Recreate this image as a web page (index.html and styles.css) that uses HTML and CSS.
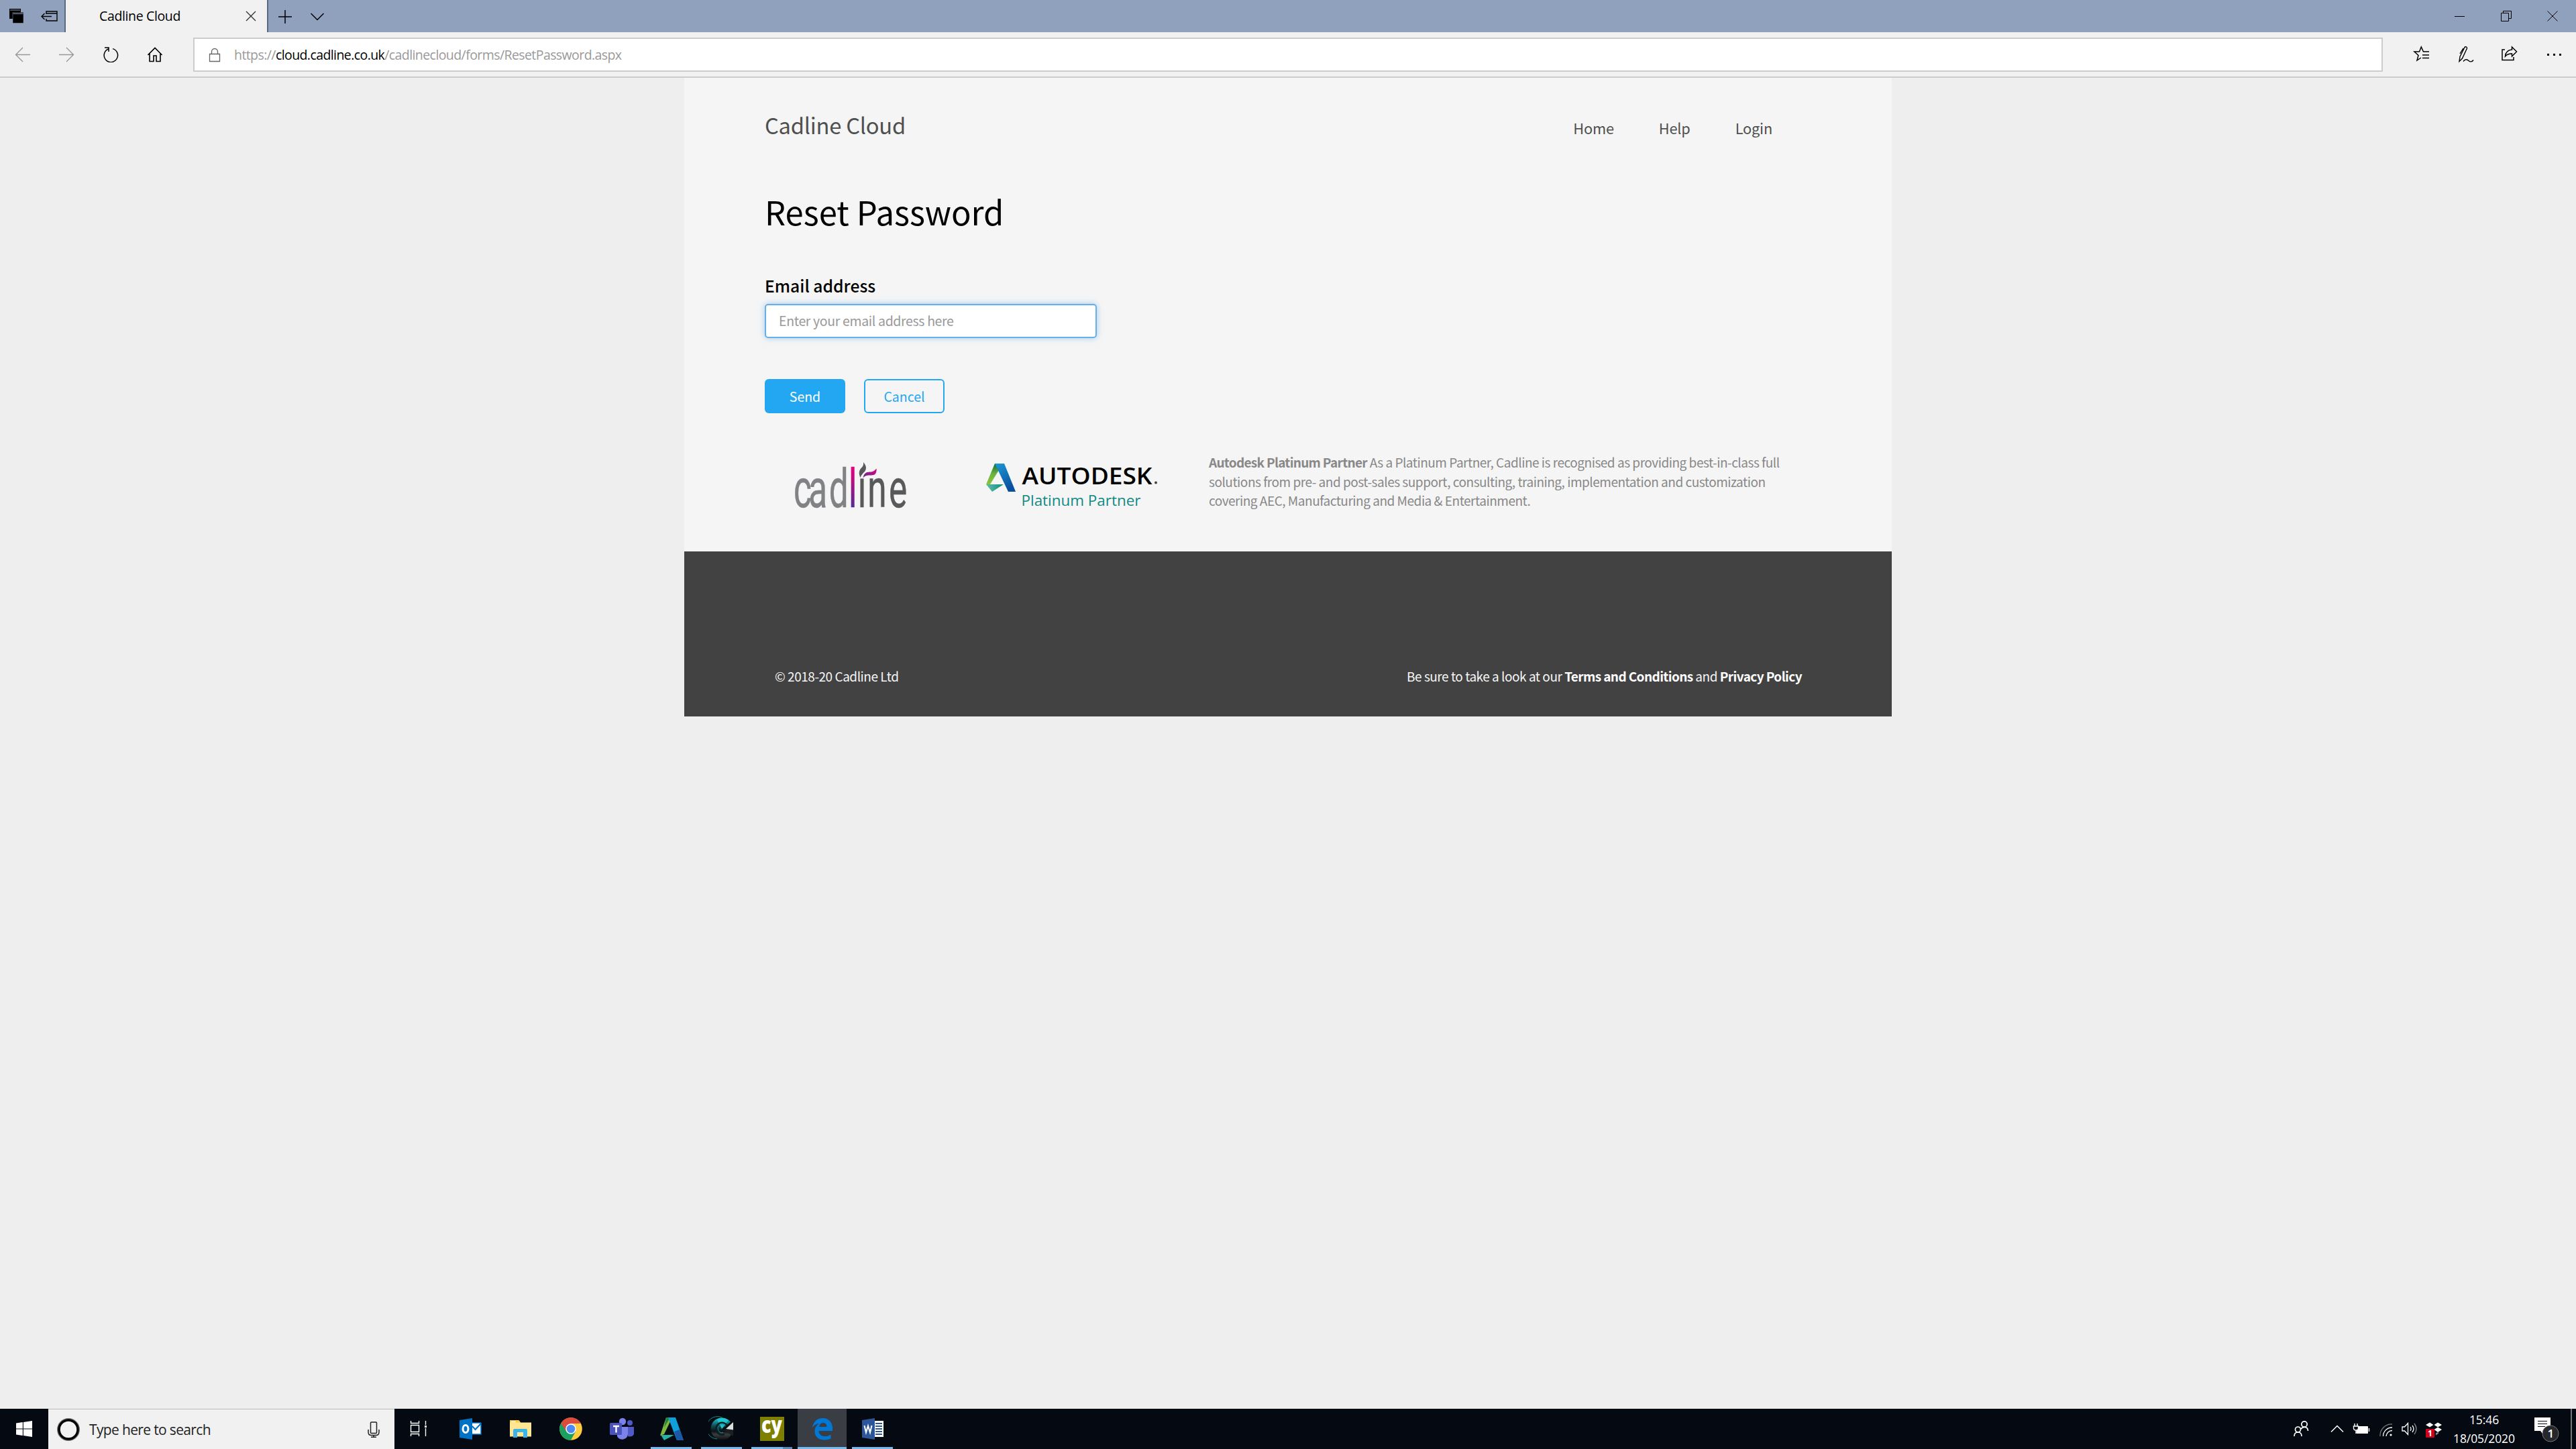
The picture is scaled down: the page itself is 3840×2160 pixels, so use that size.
FILE: index.html
```html
<!DOCTYPE html>
<html lang="en">
<head>
<meta charset="utf-8">
<title>Cadline Cloud</title>
<link rel="stylesheet" href="styles.css">
</head>
<body>
<header class="browser">
  <div class="tabstrip">
    <div class="tab-tools">
      <svg class="ico-stack" width="24" height="24" viewBox="0 0 24 24"><path d="M1 1h17v6H7v9H1z" fill="#000"/><path d="M2 3h15" stroke="#8fa1bd" stroke-width="1"/><path d="M6 6.500h16v16H6z" fill="#000" stroke="#8fa1bd" stroke-width=".5"/><path d="M6.500 8.500h15" stroke="#8fa1bd"/></svg>
      <svg class="ico-aside" width="26" height="18" viewBox="0 0 26 18" fill="none" stroke="#000" stroke-width="1.400"><path d="M8 6V2h16v14H8v-3M8 5h16M1 9.500h15M5.500 5L1 9.500 5.500 14"/></svg>
    </div>
    <div class="tab">
      <span class="tab-title">Cadline Cloud</span>
      <svg width="16" height="16" viewBox="0 0 16 16" stroke="#333" stroke-width="1.400"><path d="M1 1l14 14M15 1L1 15"/></svg>
    </div>
    <svg class="ico-new" width="20" height="20" viewBox="0 0 20 20" stroke="#000" stroke-width="1.500"><path d="M10 0v20M0 10h20"/></svg>
    <svg class="ico-chev" width="20" height="12" viewBox="0 0 20 12" fill="none" stroke="#000" stroke-width="1.500"><path d="M.5 1L10 10.500 19.500 1"/></svg>
    <div class="window-buttons">
      <svg width="16" height="16" viewBox="0 0 16 16" stroke="#000"><path d="M0 8.500h15"/></svg>
      <svg width="16" height="16" viewBox="0 0 16 16" fill="none" stroke="#000"><path d="M.5 3.500h11v12H.5zM3.500 3.500v-3h12v11h-4"/></svg>
      <svg width="16" height="16" viewBox="0 0 16 16" stroke="#000"><path d="M.5.5l15 15M15.500.5l-15 15"/></svg>
    </div>
  </div>
  <div class="toolbar">
    <svg class="nav-ico" width="24" height="24" viewBox="0 0 24 24" fill="none" stroke="#999" stroke-width="1.400"><path d="M23 12.500H1.500M12 2L1.500 12.500 12 23"/></svg>
    <svg class="nav-ico" width="24" height="24" viewBox="0 0 24 24" fill="none" stroke="#999" stroke-width="1.400"><path d="M0 12.500h21.500M11 2l10.500 10.500L11 23"/></svg>
    <svg class="nav-ico" width="24" height="24" viewBox="0 0 24 24" fill="none" stroke="#000" stroke-width="1.500"><path d="M7.500 4A10.200 10.200 0 1 0 14 3.600M2 2h6v6"/></svg>
    <svg class="nav-ico" width="24" height="24" viewBox="0 0 24 24" fill="none" stroke="#000" stroke-width="1.600"><path d="M.5 13L11 2.500 21.500 13M3 11v11.500h6V14h4v8.500h6V11"/></svg>
    <div class="address">
      <svg width="18" height="22" viewBox="0 0 18 22" fill="none" stroke="#666" stroke-width="1.300"><path d="M1.500 9.500h15v11h-15zM4.500 9.500V6a4.500 4.500 0 0 1 9 0v3.500"/></svg>
      <span class="url">https://<span class="host">cloud.cadline.co.uk</span>/cadlinecloud/forms/ResetPassword.aspx</span>
    </div>
    <div class="actions">
      <svg width="26" height="26" viewBox="0 0 26 26" fill="none" stroke="#000" stroke-width="1.500"><path d="M24 9h-8.500L12.300 2 9.500 9H2l6 5.500L6 22l6-4M14 14h10M14 18.500h10"/></svg>
      <svg width="26" height="26" viewBox="0 0 26 26" fill="none" stroke="#000" stroke-width="1.400"><path d="M3 23.500l1-7L11 2.500c1-1.500 4-.5 3.500 1.500L7.500 19zM4 12L9 4M9 23.500c3-4 6-3 8-1s5 2 7-1"/></svg>
      <svg width="26" height="26" viewBox="0 0 26 26" fill="none" stroke="#000" stroke-width="1.500"><path d="M5 6H1v15.500h17V17M5.500 16c.5-6 4-9.500 10-10V2l7 7-7 7v-4c-4 0-7.500 1-10 4z"/></svg>
      <svg width="26" height="26" viewBox="0 0 26 26"><path d="M2 12h3v3H2zM11 12h3v3h-3zM20 12h3v3h-3z"/></svg>
    </div>
  </div>
</header>

<main class="viewport">
  <div class="page">
    <div class="page-head">
      <span class="brand">Cadline Cloud</span>
      <nav class="menu"><a>Home</a><a>Help</a><a>Login</a></nav>
    </div>
    <h1>Reset Password</h1>
    <label for="email">Email address</label>
    <input class="field" id="email" type="text" placeholder="Enter your email address here">
    <div class="buttons"><button class="btn send">Send</button><button class="btn cancel">Cancel</button></div>
    <div class="partners">
      <svg class="logo-cadline" width="176" height="110" viewBox="0 -10 176 110">
        <defs>
          <linearGradient id="gl" gradientUnits="userSpaceOnUse" x1="0" y1="12" x2="0" y2="70"><stop offset="0" stop-color="#e6007e"/><stop offset="1" stop-color="#522d91"/></linearGradient>
          <linearGradient id="gp" x1="0" y1="1" x2="1" y2="0"><stop offset="0" stop-color="#5b2d91"/><stop offset="1" stop-color="#e6007e"/></linearGradient>
        </defs>
        <g transform="scale(.65 1)"><text class="wordmark" y="69.700" x="4.600 39 85.600 130.700 152 174.200 223"><tspan fill="#808285" stroke="#808285">cad</tspan><tspan fill="url(#gl)" stroke="url(#gl)">l</tspan><tspan fill="#58595b" stroke="#58595b">ıne</tspan></text></g>
        <path d="M102.500 26c-3-7-2-11 2-15 2-2 3-4 2.500-8 4 5 5.500 9 2 14-3 3-5 5-6.500 9z" fill="#58595b"/>
        <path d="M106.500 26.500c1-6 4-9 10-9 5 0 7-2 10.200-5 0 7-2 10-8 10-6 0-9 0-12.200 4z" fill="url(#gp)"/>
      </svg>
      <svg class="logo-autodesk" width="262" height="80" viewBox="0 0 262 80">
        <defs>
          <linearGradient id="ag" x1="0" y1="1" x2="0" y2="0"><stop offset="0" stop-color="#8cc63f"/><stop offset=".5" stop-color="#6cb33e"/><stop offset="1" stop-color="#0b6b3a"/></linearGradient>
          <linearGradient id="ab" x1="0" y1="0" x2=".5" y2="1"><stop offset="0" stop-color="#1c9ad6"/><stop offset="1" stop-color="#0a4f9e"/></linearGradient>
          <linearGradient id="at" x1="0" y1="0" x2="1" y2="0"><stop offset="0" stop-color="#5cc0a5"/><stop offset="1" stop-color="#0f8a84"/></linearGradient>
        </defs>
        <path d="M13 5h12L6 36H0z" fill="url(#ag)"/>
        <path d="M0 36h26L9 47z" fill="url(#at)"/>
        <path d="M13 5h14l17 42H33z" fill="url(#ab)"/>
        <text class="adsk" x="53.500" y="36.300" textLength="194" lengthAdjust="spacingAndGlyphs">AUTODESK</text>
        <circle cx="253" cy="33.500" r="2" fill="#444"/>
        <text class="plat" x="52.500" y="68" textLength="178" lengthAdjust="spacingAndGlyphs">Platinum Partner</text>
      </svg>
      <p class="blurb"><b>Autodesk Platinum Partner</b> As a Platinum Partner, Cadline is recognised as providing best-in-class full<br>solutions from pre- and post-sales support, consulting, training, implementation and customization<br>covering AEC, Manufacturing and Media &amp; Entertainment.</p>
    </div>
    <footer class="footer">
      <span>© 2018-20 Cadline Ltd</span>
      <span>Be sure to take a look at our <b>Terms and Conditions</b> and <b>Privacy Policy</b></span>
    </footer>
  </div>
</main>

<footer class="taskbar">
  <div class="start"><svg width="24" height="24" viewBox="0 0 24 24" fill="#fff"><path d="M0 3.400L9.800 2v9.500H0zM10.900 1.900L24 0v11.500H10.900zM0 12.500h9.800V22L0 20.600zM10.900 12.500H24V24l-13.100-1.900z"/></svg></div>
  <div class="search">
    <svg class="ring" width="36" height="36" viewBox="0 0 36 36" fill="none"><circle cx="18" cy="18" r="15.500" stroke="#777" stroke-width="3"/><circle cx="18" cy="18" r="14" stroke="#000" stroke-width="3.500"/></svg>
    <span class="search-text">Type here to search</span>
    <svg class="mic" width="18" height="24" viewBox="0 0 18 24" fill="none" stroke="#222" stroke-width="1.500"><rect x="4.500" y="1" width="9" height="16.500" rx="1"/><path d="M1 12v4c0 3 2 4.500 4.500 4.500h7c2.500 0 4.500-1.500 4.500-4.500v-4M9 20.500V23M5 23.200h8"/></svg>
  </div>
  <div class="tasks">
    <div class="task"><svg width="40" height="40" viewBox="0 0 40 40" fill="none" stroke="#fff" stroke-width="1.400"><path d="M6.500 8v3.500h12V8M6.500 14.500h12v10h-12zM6.500 31v-3.500h12V31M28.500 8v6M28.500 19v12"/><path d="M27 15h3v3h-3z" fill="#fff" stroke="none"/></svg></div>
    <div class="task"><svg width="40" height="40" viewBox="0 0 40 40"><path d="M18 11h18v17H18z" fill="#fff"/><path d="M18 11h18M36 11v17H18" stroke="#0072c6" fill="none" stroke-width="1.500"/><path d="M23 16l4.500 5L36 12" fill="none" stroke="#0072c6" stroke-width="2"/><path d="M4 7l19-3v32L4 33z" fill="#0072c6"/><ellipse cx="13" cy="20" rx="4" ry="5.500" fill="none" stroke="#fff" stroke-width="3"/></svg></div>
    <div class="task"><svg width="40" height="40" viewBox="0 0 40 40"><path d="M4 7.500h14l2 3h16v21H4z" fill="#ffe694"/><path d="M4 7h13l2 3.500H4z" fill="#ffcb2e"/><path d="M6 9.500h7" stroke="#fff" stroke-width="1.500"/><path d="M9 33V22q0-2 2-2h17q2 0 2 2v11h-6v-8h-9v8z" fill="#3cb4e7"/></svg></div>
    <div class="task"><svg width="40" height="40" viewBox="0 0 40 40"><circle cx="20" cy="20" r="16.800" fill="#ffcd40"/><path d="M5.450 11.600A16.800 16.800 0 0 0 20 36.800L27 24 20 20z" fill="#19a15f"/><path d="M20 12h14.700A16.800 16.800 0 0 0 5.450 11.600L13 24z" fill="#dd4b3e"/><circle cx="20" cy="20" r="7.800" fill="#fff"/><circle cx="20" cy="20" r="6.300" fill="#4c8bf5"/></svg></div>
    <div class="task"><svg width="40" height="40" viewBox="0 0 40 40"><circle cx="33" cy="11" r="4" fill="#5059c9"/><path d="M30 17h9v11q-3 5-9 3z" fill="#5059c9"/><circle cx="22" cy="9" r="5.200" fill="#7b83eb"/><path d="M14 17h16v11a8.500 8.500 0 0 1-16 3z" fill="#7b83eb"/><rect x="3" y="11" width="18" height="18" rx="1.500" fill="#4b53bc"/><path d="M8 16h9M12.500 16v9.500" stroke="#fff" stroke-width="2.400"/></svg></div>
    <div class="task open"><svg width="40" height="40" viewBox="0 0 40 40"><path d="M12 3h9L9 28l-6 2z" fill="#7cb93e"/><path d="M12 3h6L9 18z" fill="#23843c"/><path d="M4 29h20L9 37z" fill="#25b5a5"/><path d="M15 3h11l12 34H28z" fill="#0fa0dc"/><path d="M24 24l8-3 6 16H28z" fill="#1959a8"/></svg></div>
    <div class="task open"><svg width="40" height="40" viewBox="0 0 40 40"><defs><linearGradient id="cg" x1="0" y1="0" x2="0" y2="1"><stop offset="0" stop-color="#20cfd8"/><stop offset=".35" stop-color="#0d5158"/><stop offset=".6" stop-color="#0c1214"/><stop offset=".75" stop-color="#3a3d40"/><stop offset="1" stop-color="#0c0e10"/></linearGradient></defs><circle cx="20" cy="20" r="16.500" fill="url(#cg)"/><path d="M21 3.300A16.700 16.700 0 1 0 13 35" fill="none" stroke="#168a93"/><path d="M20 20L30 7a17 17 0 0 0-17-1z" fill="#1fc6d0"/><path d="M28 15a9 9 0 1 0-4 13" stroke="#0c2023" fill="none" stroke-width="2.500"/><path d="M25 16a6 6 0 1 0-3 9.500" stroke="#1a8c94" fill="none"/><path d="M20 21L37 6v15z" fill="#0a0d10"/><path d="M26 20L37 10v11.500z" fill="#ddd"/><path d="M22 21l15 1v9z" fill="#1c1e20"/></svg></div>
    <div class="task open multi"><svg width="40" height="40" viewBox="0 0 40 40"><path d="M2 2h36v36H2z" fill="#808000"/><text class="cy" x="4" y="26" textLength="31" lengthAdjust="spacingAndGlyphs">cy</text></svg></div>
    <div class="task open active"><svg width="40" height="40" viewBox="0 0 40 40"><path d="M5 18C7 8 13 4 20.500 4 30 4 35 11 35 19v4H14.500c.5 9 11 10 18 5.500v6C22 39 8 36 8.500 23c.3-5 3-9 7-11-4 0-8 2-10.500 6zM15 17h11.500c0-8-10.500-8-11.500 0z" fill="#0078d7"/></svg></div>
    <div class="task open"><svg width="40" height="40" viewBox="0 0 40 40"><path d="M18 8h18v24H18z" fill="#fff"/><path d="M24 12h10M24 16h10M24 20h10M24 24h10M24 28h10" stroke="#2b579a" stroke-width="1.800"/><path d="M4 7l19-3v32L4 33z" fill="#2b579a"/><path d="M7.500 15l2.500 10.500 3-10 3 10L18.500 15" fill="none" stroke="#fff" stroke-width="2"/></svg></div>
  </div>
  <div class="tray">
    <svg class="t-people" width="24" height="26" viewBox="0 0 24 26" fill="none" stroke="#fff" stroke-width="1.700"><circle cx="16" cy="6" r="4.200"/><circle cx="6.500" cy="14" r="4"/><path d="M1 24c0-4 2.500-6 5.500-6s5.500 2 5.500 6M10.500 13.500c1.500-2 3-3.200 5.500-3.200 3.500 0 5.500 2.200 5.500 5.700"/></svg>
    <svg class="t-chev" width="20" height="12" viewBox="0 0 20 12" fill="none" stroke="#fff" stroke-width="1.500"><path d="M1 10.500L10 1.500l9 9"/></svg>
    <svg class="t-batt" width="26" height="18" viewBox="0 0 26 18"><path d="M7 5.500h15.500v10H6V12" fill="#fff" stroke="#fff"/><path d="M24.500 8v5M1.500 5h7v3a3.500 3 0 0 1-7 0zM3 1v4M7 1v4M5 11v5" fill="#050a12" stroke="#fff" stroke-width="1.400"/></svg>
    <svg class="t-wifi" width="20" height="20" viewBox="0 0 20 20" fill="none" stroke="#fff" stroke-width="1.300"><path d="M1 19A17 17 0 0 1 19 1" stroke="#777"/><path d="M5.500 19A13 13 0 0 1 19 6M10 19a9 9 0 0 1 9-8.500"/><circle cx="17" cy="17" r="1.600" fill="#fff" stroke="none"/></svg>
    <svg class="t-vol" width="24" height="20" viewBox="0 0 24 20" fill="none" stroke="#fff" stroke-width="1.300"><path d="M1 7h3.500L9.500 1.500v17L4.500 13H1zM13 7q2 3 0 6M16 5q4 5 0 10"/><path d="M19 2q6 8 0 16" stroke="#888"/></svg>
    <svg class="t-drop" width="26" height="26" viewBox="0 0 26 26"><path d="M1 5l6-3.500L12.500 5 7 8.500zM13.500 5L19 1.500 25 5l-6 3.500zM13.500 12l5.500-3.500 6 3.500-6 4z" fill="#fff"/><path d="M16 17l4-1v2l-4 2.500z" fill="#888"/><rect x="1" y="11" width="13" height="13" rx="1" fill="#d0021b"/><text class="badge" x="4" y="22">1</text></svg>
    <div class="clock"><span>15:46</span><span>18/05/2020</span></div>
    <svg class="t-note" width="38" height="40" viewBox="0 0 38 40"><path d="M0 3h24v20H14l-2 4-3-4H0z" fill="#fff"/><path d="M5 8.500h14M5 12.500h14M5 16.500h11" stroke="#050a12"/><circle cx="24" cy="27" r="12" fill="#26282b" stroke="#777"/><text class="count" x="19.500" y="33">1</text></svg>
    <i class="peek"></i>
  </div>
</footer>
</body>
</html>
```
FILE: styles.css
```css
* { box-sizing: border-box; }
html, body { margin: 0; height: 100%; }
body {
  display: flex;
  flex-direction: column;
  width: 3840px;
  height: 2160px;
  overflow: hidden;
  background: #eee;
  font-family: "Noto Sans CJK SC", "Noto Sans", sans-serif;
}
svg { display: block; flex: none; }
span, a { white-space: nowrap; }

/* Browser chrome */
.browser { flex: none; height: 116px; background: #f1f1f1; border-bottom: 2px solid #ccc; font-family: "Open Sans", sans-serif; }
.tabstrip { display: flex; align-items: center; height: 48px; background: #8fa1bd; }
.tab-tools { display: flex; align-items: center; width: 96px; padding-left: 13px; }
.ico-aside { margin-left: 24px; }
.tab { display: flex; align-items: center; justify-content: space-between; width: 304px; height: 48px; padding: 0 16px 0 50px; background: #f1f1f1; border: solid #5d6b80; border-width: 0 2px; }
.tab-title { font-size: 19.500px; line-height: 48px; letter-spacing: -.36px; }
.ico-new { margin: 2px 0 0 15px; }
.ico-chev { margin: 2px 0 0 28px; }
.window-buttons { display: flex; gap: 53px; margin-left: auto; padding-right: 27px; }
.toolbar { display: flex; align-items: center; height: 66px; }
.nav-ico { margin-left: 22px; margin-right: 20px; }
.address { display: flex; align-items: center; width: 3264px; height: 51px; margin: 1px 0 0 24px; padding-left: 21px; background: #fff; border: 2px solid #ccc; }
.url { margin-left: 20px; color: #999; font-size: 19.500px; line-height: 46px; letter-spacing: -.58px; }
.host { color: #000; }
.actions { display: flex; gap: 40px; margin-left: 45px; }

/* Page */
.viewport { flex: 1; }
.page { width: 1800px; height: 952px; margin: 0 auto; background: #f5f5f5; }
.page-head { display: flex; align-items: baseline; justify-content: space-between; padding: 40px 178px 0 120px; height: 100px; }
.brand { color: #4f4f4f; font-size: 32.700px; line-height: 60px; letter-spacing: -.25px; }
.menu { display: flex; gap: 67px; color: #4f4f4f; font-size: 21.800px; line-height: 40px; letter-spacing: -.2px; }
h1 { margin: 59px 0 0 120px; font-size: 49px; font-weight: 400; line-height: 80px; }
label { display: block; margin: 52px 0 0 120px; font-size: 24.700px; font-weight: 500; line-height: 36px; }
.field { display: block; width: 495px; height: 51px; margin: 10px 0 0 120px; padding: 0 19px 2px; font-family: inherit; font-size: 19.500px; letter-spacing: -.35px; background: #fff; border: 2px solid #66afe9; border-radius: 5px; outline: 0; box-shadow: inset 0 1px 2px rgba(0,0,0,.08), 0 0 10px rgba(102,175,233,.6); }
.field::placeholder { color: #999; opacity: 1; }
.buttons { display: flex; gap: 28px; margin: 61px 0 0 120px; }
.btn { width: 120px; height: 51px; padding: 0; font-family: inherit; font-size: 19.500px; line-height: 45px; border: 2px solid #24a7f2; border-radius: 6px; }
.send { color: #fff; background: #24a7f2; }
.cancel { color: #24a7f2; background: transparent; }
.partners { display: flex; align-items: flex-start; height: 206px; padding: 59px 0 0 160px; }
.logo-cadline { margin-top: 1px; }
.logo-autodesk { margin: 11px 0 0 114px; }
.wordmark { font-family: Roboto, sans-serif; font-size: 79px; stroke-width: .5; }
.adsk { font-family: "Open Sans", sans-serif; font-size: 33.500px; font-weight: 600; }
.plat { font-family: "Open Sans", sans-serif; font-size: 21.500px; fill: #0f8a84; }
.blurb { margin: 0 0 0 70px; color: #888; font-size: 19px; line-height: 28.600px; letter-spacing: -.48px; white-space: nowrap; }
.blurb b { font-weight: 700; letter-spacing: -.7px; }
.footer { display: flex; justify-content: space-between; height: 246px; padding: 172px 134px 0 135px; color: #f5f5f5; background: #424242; font-size: 19px; line-height: 28px; letter-spacing: -.47px; }
.footer b { color: #fff; font-weight: 700; letter-spacing: -.6px; }

/* Taskbar */
.taskbar { display: flex; flex: none; height: 60px; background: #050a12; font-family: "Open Sans", sans-serif; }
.start { width: 72px; padding: 18px 0 0 24px; }
.search { display: flex; align-items: center; width: 516px; padding-left: 12px; background: #f1f1f1; border-top: 1px solid #bbb; }
.search-text { margin-left: 13px; color: #222; font-size: 21px; line-height: 58px; letter-spacing: -.65px; }
.mic { margin: 0 22px 0 auto; }
.tasks { display: flex; }
.task { display: flex; align-items: center; justify-content: center; width: 75px; height: 60px; }
.open { background: linear-gradient(#76b9ed, #76b9ed) 50% 100% / 61px 3px no-repeat; }
.multi { background: linear-gradient(90deg, #76b9ed 47px, #5a8ab3 47px) 50% 100% / 61px 3px no-repeat; }
.active { width: 73px; margin: 0 1px; background: linear-gradient(#76b9ed, #76b9ed) 50% 100% / 100% 3px no-repeat #3a3d43; }
.cy { fill: #fff; font-family: "Open Sans", sans-serif; font-size: 34px; font-weight: 800; }
.tray { display: flex; align-items: center; margin-left: auto; color: #fff; }
.t-chev { margin-left: 31px; }
.t-batt { margin-left: 13px; }
.t-wifi { margin-left: 14px; margin-top: 3px; }
.t-vol { margin-left: 13px; }
.t-drop { margin-left: 11px; margin-top: 3px; }
.clock { display: flex; flex-direction: column; align-items: center; width: 92px; margin-left: 16px; font-size: 17.500px; line-height: 28px; letter-spacing: -.1px; }
.t-note { margin-left: 29px; }
.badge { fill: #fff; font: 700 12px "Open Sans", sans-serif; }
.count { fill: #fff; font: 600 17px "Open Sans", sans-serif; }
.peek { width: 2px; height: 60px; margin: 0 6px 0 16px; background: #777; }
```
